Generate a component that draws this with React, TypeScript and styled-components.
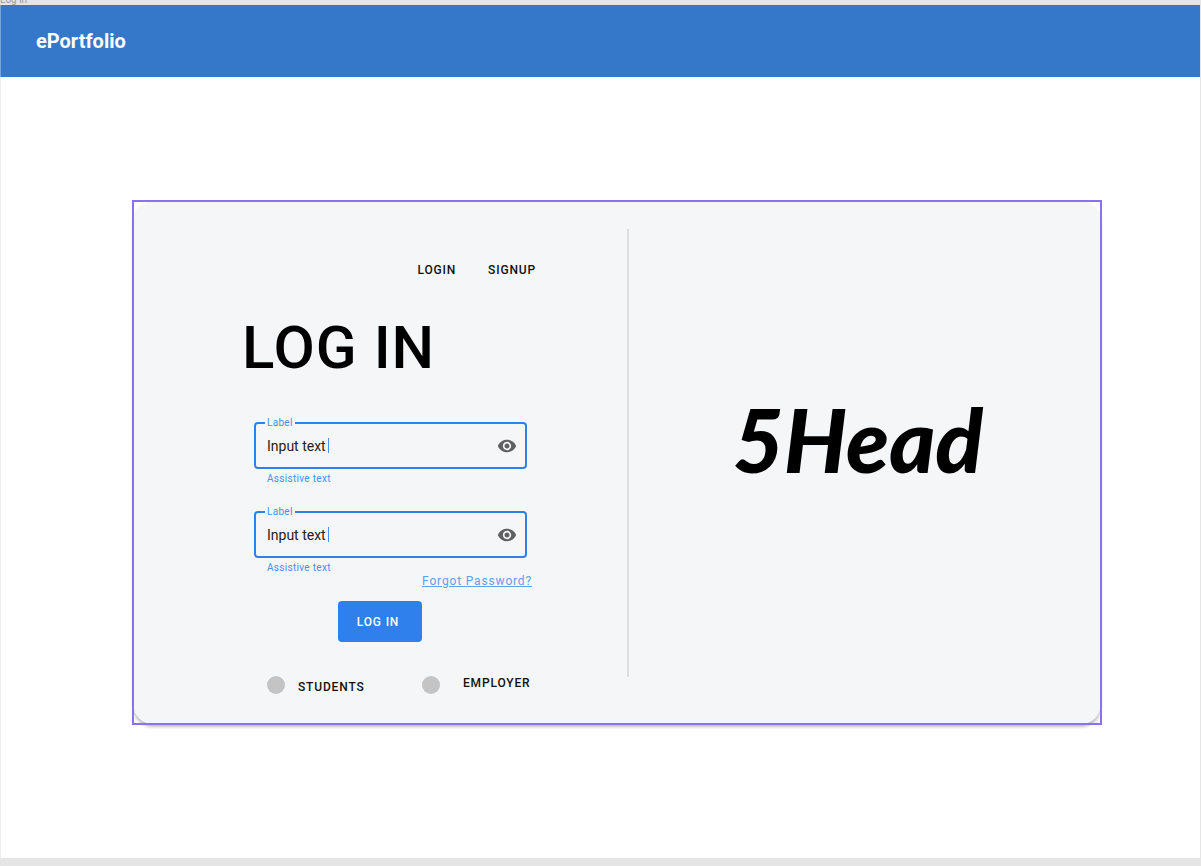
import React, { useState } from "react";
import styled, { createGlobalStyle } from "styled-components";
import { MdVisibility } from "react-icons/md";

const GlobalStyle = createGlobalStyle`
  * { box-sizing: border-box; }
  body {
    margin: 0;
    background: #e5e5e5;
    color: #000;
    font-family: Roboto, "Liberation Sans", sans-serif;
  }
`;

const Page = styled.div`
  min-height: 100vh;
  display: flex;
  flex-direction: column;
  padding: 0 1px 8px 0;
`;

const FrameName = styled.div`
  height: 5px;
  overflow: hidden;
  display: flex;
  align-items: flex-end;
  color: #999;
  font-size: 10px;
  line-height: 10px;
`;

const Header = styled.header`
  height: 72px;
  padding: 0 35px;
  display: flex;
  align-items: center;
  background: #3578c9;
  border-left: 1px solid #78a4db;
`;

const SiteName = styled.a`
  color: #fff;
  font-size: 20px;
  font-weight: 700;
  line-height: 24px;
  text-decoration: none;
`;

const Main = styled.main`
  flex: 1;
  padding: 124px 99px 124px 132px;
  background: #fff;
  border-left: 1px solid #eee;
`;

const Selection = styled.div`
  outline: 2px solid #8a70f4;
  outline-offset: -1px;
`;

const Card = styled.section`
  display: grid;
  grid-template-columns: 494fr 474fr;
  background: #f4f6f8;
  border-radius: 20px;
  box-shadow: 0 3px 3px rgba(0, 0, 0, 0.25);
`;

const FormPanel = styled.div`
  padding: 61px 0 29px 109px;
`;

const FormColumn = styled.form`
  width: 294px;
  display: flex;
  flex-direction: column;
`;

const Tabs = styled.nav`
  display: flex;
  justify-content: flex-end;
  gap: 32px;
`;

const TabLink = styled.a`
  color: #111;
  font-size: 12px;
  font-weight: 500;
  line-height: 16px;
  letter-spacing: 0.07em;
  text-decoration: none;
`;

const Title = styled.h1`
  margin: 34px 0 38px;
  font-size: 60px;
  font-weight: 500;
  line-height: 72px;
  letter-spacing: 1px;
  white-space: nowrap;
`;

const Fields = styled.div`
  display: flex;
  flex-direction: column;
  gap: 26px;
  padding: 0 9px 0 12px;
`;

const FieldBox = styled.div`
  position: relative;
  height: 47px;
  display: flex;
  align-items: center;
  padding: 0 8px 0 11px;
  border: 2px solid #2f80ed;
  border-radius: 4px;
`;

const FieldLabel = styled.label`
  position: absolute;
  top: -7px;
  left: 9px;
  padding: 0 2px;
  background: #f4f6f8;
  color: #4a90ee;
  font-size: 10px;
  line-height: 12px;
  letter-spacing: 0.03em;
`;

const TextInput = styled.input`
  flex: 1;
  min-width: 0;
  padding: 0;
  border: 0;
  outline: 0;
  background: transparent;
  color: #222;
  font-family: inherit;
  font-size: 14px;
  line-height: 20px;
`;

const Caret = styled.span`
  position: absolute;
  left: 72px;
  top: 14px;
  width: 1px;
  height: 15px;
  background: #4a90ee;
`;

const EyeButton = styled.button`
  display: flex;
  padding: 0;
  border: 0;
  background: none;
  color: #5f6062;
  cursor: pointer;
`;

const Assistive = styled.p`
  margin: 4px 0 0 13px;
  color: #4a90ee;
  font-size: 10px;
  line-height: 12px;
  letter-spacing: 0.03em;
`;

const ForgotLink = styled.a`
  align-self: flex-end;
  margin: -1px 4px 0 0;
  color: #629ff2;
  font-size: 12px;
  line-height: 16px;
  letter-spacing: 0.07em;
`;

const SubmitButton = styled.button`
  width: 84px;
  height: 41px;
  margin: 12px 0 33px 96px;
  padding: 0 4px 0 0;
  border: 0;
  border-radius: 4px;
  background: #2f80ed;
  color: #fff;
  font-family: inherit;
  font-size: 12px;
  font-weight: 500;
  letter-spacing: 0.07em;
  cursor: pointer;
`;

const Roles = styled.div`
  display: grid;
  grid-template-columns: 155px auto;
  padding-left: 25px;
`;

const Role = styled.div<{ $gap: number }>`
  height: 20px;
  display: flex;
  align-items: center;
  gap: ${(p) => p.$gap}px;
`;

const RoleRadio = styled.input`
  appearance: none;
  width: 18px;
  height: 18px;
  margin: 0;
  border-radius: 50%;
  background: #c4c4c4;

  &:checked {
    background: #2f80ed;
  }
`;

const RoleLabel = styled.label<{ $align: string }>`
  align-self: ${(p) => p.$align};
  color: #111;
  font-size: 12px;
  font-weight: 500;
  line-height: 16px;
  letter-spacing: 0.07em;
`;

const BrandPanel = styled.div`
  display: flex;
  margin: 28px 0 47px;
  padding: 0 14px 28px 0;
  align-items: center;
  justify-content: center;
  border-left: 2px solid #dcdee0;
`;

const Brand = styled.div`
  font-family: Lato, "Liberation Sans", sans-serif;
  font-size: 88px;
  font-style: italic;
  font-weight: 900;
  line-height: 96px;
`;

function PasswordField({ id }: { id: string }) {
  const [value, setValue] = useState("Input text");
  return (
    <div>
      <FieldBox>
        <FieldLabel htmlFor={id}>Label</FieldLabel>
        <TextInput
          id={id}
          type="text"
          value={value}
          aria-describedby={`${id}-help`}
          onChange={(e) => setValue(e.target.value)}
        />
        <Caret />
        <EyeButton type="button" aria-label="Show text">
          <MdVisibility size={20} />
        </EyeButton>
      </FieldBox>
      <Assistive id={`${id}-help`}>Assistive text</Assistive>
    </div>
  );
}

export default function App() {
  return (
    <>
      <GlobalStyle />
      <Page>
        <FrameName>Log in</FrameName>
        <Header>
          <SiteName href="#">ePortfolio</SiteName>
        </Header>
        <Main>
          <Selection>
            <Card>
              <FormPanel>
                <FormColumn onSubmit={(e) => e.preventDefault()}>
                  <Tabs>
                    <TabLink href="#login">LOGIN</TabLink>
                    <TabLink href="#signup">SIGNUP</TabLink>
                  </Tabs>
                  <Title>LOG IN</Title>
                  <Fields>
                    <PasswordField id="username" />
                    <PasswordField id="password" />
                  </Fields>
                  <ForgotLink href="#forgot">Forgot Password?</ForgotLink>
                  <SubmitButton type="submit">LOG IN</SubmitButton>
                  <Roles>
                    <Role $gap={13}>
                      <RoleRadio type="radio" name="role" id="students" />
                      <RoleLabel $align="flex-end" htmlFor="students">STUDENTS</RoleLabel>
                    </Role>
                    <Role $gap={23}>
                      <RoleRadio type="radio" name="role" id="employer" />
                      <RoleLabel $align="flex-start" htmlFor="employer">EMPLOYER</RoleLabel>
                    </Role>
                  </Roles>
                </FormColumn>
              </FormPanel>
              <BrandPanel>
                <Brand>5Head</Brand>
              </BrandPanel>
            </Card>
          </Selection>
        </Main>
      </Page>
    </>
  );
}
